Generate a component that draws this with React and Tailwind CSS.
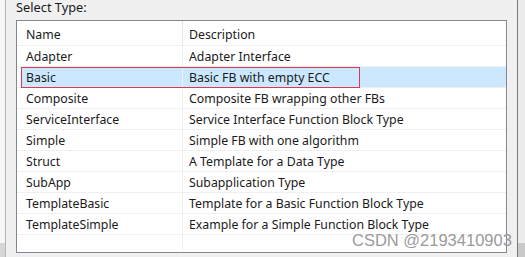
const types = [
  { name: 'Adapter', desc: 'Adapter Interface' },
  { name: 'Basic', desc: 'Basic FB with empty ECC', selected: true },
  { name: 'Composite', desc: 'Composite FB wrapping other FBs' },
  { name: 'ServiceInterface', desc: 'Service Interface Function Block Type' },
  { name: 'Simple', desc: 'Simple FB with one algorithm' },
  { name: 'Struct', desc: 'A Template for a Data Type' },
  { name: 'SubApp', desc: 'Subapplication Type' },
  { name: 'TemplateBasic', desc: 'Template for a Basic Function Block Type' },
  { name: 'TemplateSimple', desc: 'Example for a Simple Function Block Type' },
];

const font = { fontFamily: '"Noto Sans", "Noto Sans CJK SC", sans-serif' };

const Row = ({ name, desc, selected }) => (
  <div className="relative flex h-[21px] border-b border-[#f0f0f0]">
    {selected && <div className="absolute left-[4px] right-0 top-0 bottom-0 bg-[#cce8ff]" />}
    <div className="relative w-[166px] pl-[9px] border-r border-[#f0f0f0] leading-[22px]">{name}</div>
    <div className="relative flex-1 pl-[6px] leading-[22px]">{desc}</div>
    {/* highlight box drawn over the selected row */}
    {selected && <div className="absolute left-[4px] top-0 h-[21px] w-[339px] ring-1 ring-inset ring-[#e0364f]" />}
  </div>
);

export default function App() {
  return (
    <div className="relative w-[525px] h-[257px] flex bg-[#f0f0f0] overflow-hidden text-[12.3px] text-[#1a1a1a]" style={font}>
      {/* left edge of window behind */}
      <div className="w-[6px] flex flex-col border-r border-[#b4b4b4]">
        <div className="flex-1 bg-[#f6f6f6]" />
        <div className="h-[14px] bg-[#d6d6d6]" />
      </div>

      <div className="w-[511px] flex flex-col pl-[10px] pr-[10px]">
        <div className="h-[20px] leading-[14px] text-[12.8px]">Select Type:</div>
        <div className="h-[233px] border border-[#828790] bg-white">
          <div className="flex h-[25px] border-b border-[#f0f0f0]">
            <div className="w-[166px] pl-[9px] border-r border-[#e5e5e5] leading-[28px]">Name</div>
            <div className="flex-1 pl-[6px] leading-[28px]">Description</div>
          </div>
          {types.map(t => (
            <Row key={t.name} {...t} />
          ))}
          <div className="flex h-[17px]">
            <div className="w-[166px] border-r border-[#f0f0f0]" />
          </div>
        </div>
      </div>

      {/* right edge */}
      <div className="w-[8px] flex flex-col border-l border-[#7a7a7a]">
        <div className="flex-1 bg-[#ececec]" />
        <div className="h-[14px] bg-[#c9c9c9]" />
      </div>

      <div
        className="absolute left-[352px] top-[230px] whitespace-nowrap text-[16.5px] leading-[20px] text-[#9a9a9a]"
        style={{ fontFamily: '"Liberation Sans", Arial, sans-serif' }}
      >
        CSDN @2193410903
      </div>
    </div>
  );
}
